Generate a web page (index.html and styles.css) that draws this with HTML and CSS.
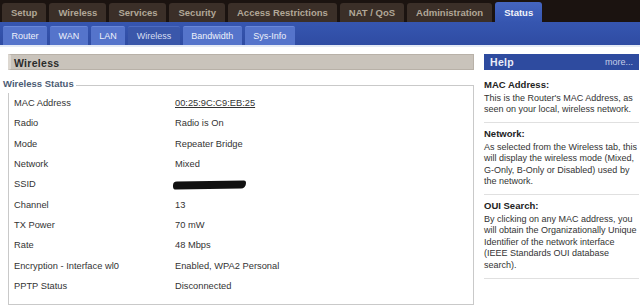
FILE: index.html
```html
<!DOCTYPE html>
<html lang="en">
<head>
    <meta charset="UTF-8">
    <meta name="viewport" content="width=device-width, initial-scale=1.0">
    <title>Status - Wireless</title>
    <link rel="stylesheet" href="styles.css">
</head>
<body>
    <div class="topnav">
        <a class="tab" href="#">Setup</a>
        <a class="tab" href="#">Wireless</a>
        <a class="tab" href="#">Services</a>
        <a class="tab" href="#">Security</a>
        <a class="tab" href="#">Access Restrictions</a>
        <a class="tab" href="#">NAT / QoS</a>
        <a class="tab" href="#">Administration</a>
        <a class="tab active" href="#">Status</a>
    </div>
    <div class="subnav">
        <a class="subtab" href="#">Router</a>
        <a class="subtab" href="#">WAN</a>
        <a class="subtab" href="#">LAN</a>
        <a class="subtab active" href="#">Wireless</a>
        <a class="subtab" href="#">Bandwidth</a>
        <a class="subtab" href="#">Sys-Info</a>
    </div>

    <div class="main">
        <div class="content">
            <h2 class="section-title">Wireless</h2>
            <fieldset class="status">
                <legend>Wireless Status</legend>
                <div class="rows">
                    <span class="label">MAC Address</span>
                    <span class="value"><a class="mac" href="#">00:25:9C:C9:EB:25</a></span>
                    <span class="label">Radio</span>
                    <span class="value">Radio is On</span>
                    <span class="label">Mode</span>
                    <span class="value">Repeater Bridge</span>
                    <span class="label">Network</span>
                    <span class="value">Mixed</span>
                    <span class="label">SSID</span>
                    <span class="value"><span class="redacted"></span></span>
                    <span class="label">Channel</span>
                    <span class="value">13</span>
                    <span class="label">TX Power</span>
                    <span class="value">70 mW</span>
                    <span class="label">Rate</span>
                    <span class="value">48 Mbps</span>
                    <span class="label">Encryption - Interface wl0</span>
                    <span class="value">Enabled, WPA2 Personal</span>
                    <span class="label">PPTP Status</span>
                    <span class="value">Disconnected</span>
                </div>
            </fieldset>
        </div>

        <aside class="help">
            <div class="help-header">
                <span class="help-title">Help</span>
                <a class="more" href="#">more...</a>
            </div>
            <div class="help-item">
                <div class="help-term">MAC Address:</div>
                <div class="help-text">This is the Router's MAC Address, as seen on your local, wireless network.</div>
            </div>
            <div class="help-item">
                <div class="help-term">Network:</div>
                <div class="help-text">As selected from the Wireless tab, this will display the wireless mode (Mixed, G-Only, B-Only or Disabled) used by the network.</div>
            </div>
            <div class="help-item">
                <div class="help-term">OUI Search:</div>
                <div class="help-text">By clicking on any MAC address, you will obtain the Organizationally Unique Identifier of the network interface (IEEE Standards OUI database search).</div>
            </div>
        </aside>
    </div>
</body>
</html>
```

FILE: styles.css
```css
* {
    margin: 0;
    padding: 0;
    box-sizing: border-box;
}

body {
    font-family: "Liberation Sans", Arial, sans-serif;
    font-size: 9.3px;
    color: #333;
    background: #fff;
    width: 640px;
    height: 308px;
    overflow: hidden;
}

a {
    text-decoration: none;
    color: inherit;
}

/* top level tabs */
.topnav {
    display: flex;
    align-items: flex-end;
    gap: 3px;
    height: 22px;
    padding-left: 2px;
    background: #1b1310;
}

.tab {
    height: 19px;
    line-height: 19px;
    padding: 0 9px;
    background: #3b2f28;
    border-radius: 3px 3px 0 0;
    color: #b1a797;
    font-weight: bold;
    font-size: 9.5px;
}

.tab.active {
    height: 20px;
    line-height: 21px;
    background: linear-gradient(#4565c0, #3656b0);
    color: #f2f4fa;
}

/* second level tabs */
.subnav {
    display: flex;
    align-items: flex-end;
    gap: 3px;
    height: 23px;
    padding-left: 3px;
    background: linear-gradient(#3656b0, #2f4ca3);
    border-bottom: 2px solid #e4eaf5;
    box-sizing: content-box;
}

.subtab {
    height: 19px;
    line-height: 19px;
    padding: 0 8.5px;
    background: #5574cb;
    border-top: 1px solid #6987d8;
    border-radius: 2px 2px 0 0;
    color: #eef1fa;
    font-size: 9px;
}

.subtab.active {
    background: #3a57aa;
    border-top-color: #4d6bc0;
    color: #d7def2;
}

/* page body */
.main {
    display: grid;
    grid-template-columns: 478px 155px;
    column-gap: 6px;
}

.content {
    padding: 7px 4px 0 8px;
}

.section-title {
    height: 16px;
    line-height: 16px;
    padding-left: 3px;
    background: #c9c3bb;
    border: 1px solid #b8b1a8;
    border-left: 3px solid #ddd8d1;
    color: #2b2b2b;
    font-size: 10.5px;
    font-weight: bold;
    letter-spacing: 0.3px;
}

.status {
    margin-top: 8px;
    border: 1px solid #c9c9c9;
    padding: 0 5px 8px 5px;
}

.status legend {
    margin-left: -11px;
    padding: 0 2px 3px 0;
    line-height: 12px;
    color: #4b5b73;
    font-weight: bold;
    font-size: 9.5px;
}

.rows {
    display: grid;
    grid-template-columns: 161px 1fr;
    grid-auto-rows: 20.33px;
    align-items: center;
}

.mac {
    text-decoration: underline;
}

.redacted {
    display: inline-block;
    width: 73px;
    height: 8px;
    margin-left: -2px;
    background: #111;
    border-radius: 4px 2px 5px 3px;
    transform: rotate(-1deg);
    vertical-align: middle;
}

/* help panel */
.help {
    padding-top: 7px;
}

.help-header {
    display: flex;
    justify-content: space-between;
    align-items: center;
    height: 16px;
    padding: 0 6px;
    background: #2e4b9f;
}

.help-title {
    color: #e9edf7;
    font-weight: bold;
    font-size: 10.5px;
    letter-spacing: 0.3px;
}

.more {
    color: #c6cee8;
    font-size: 9px;
}

.help-item {
    padding-bottom: 7px;
    border-bottom: 1px solid #e0e0e0;
    margin-top: 5px;
}

.help-header + .help-item {
    margin-top: 9px;
}

.help-term {
    line-height: 12px;
    font-weight: bold;
    font-size: 9.5px;
    color: #222;
}

.help-text {
    margin-top: 1.5px;
    line-height: 11.4px;
    font-size: 9px;
    color: #333;
}
```
